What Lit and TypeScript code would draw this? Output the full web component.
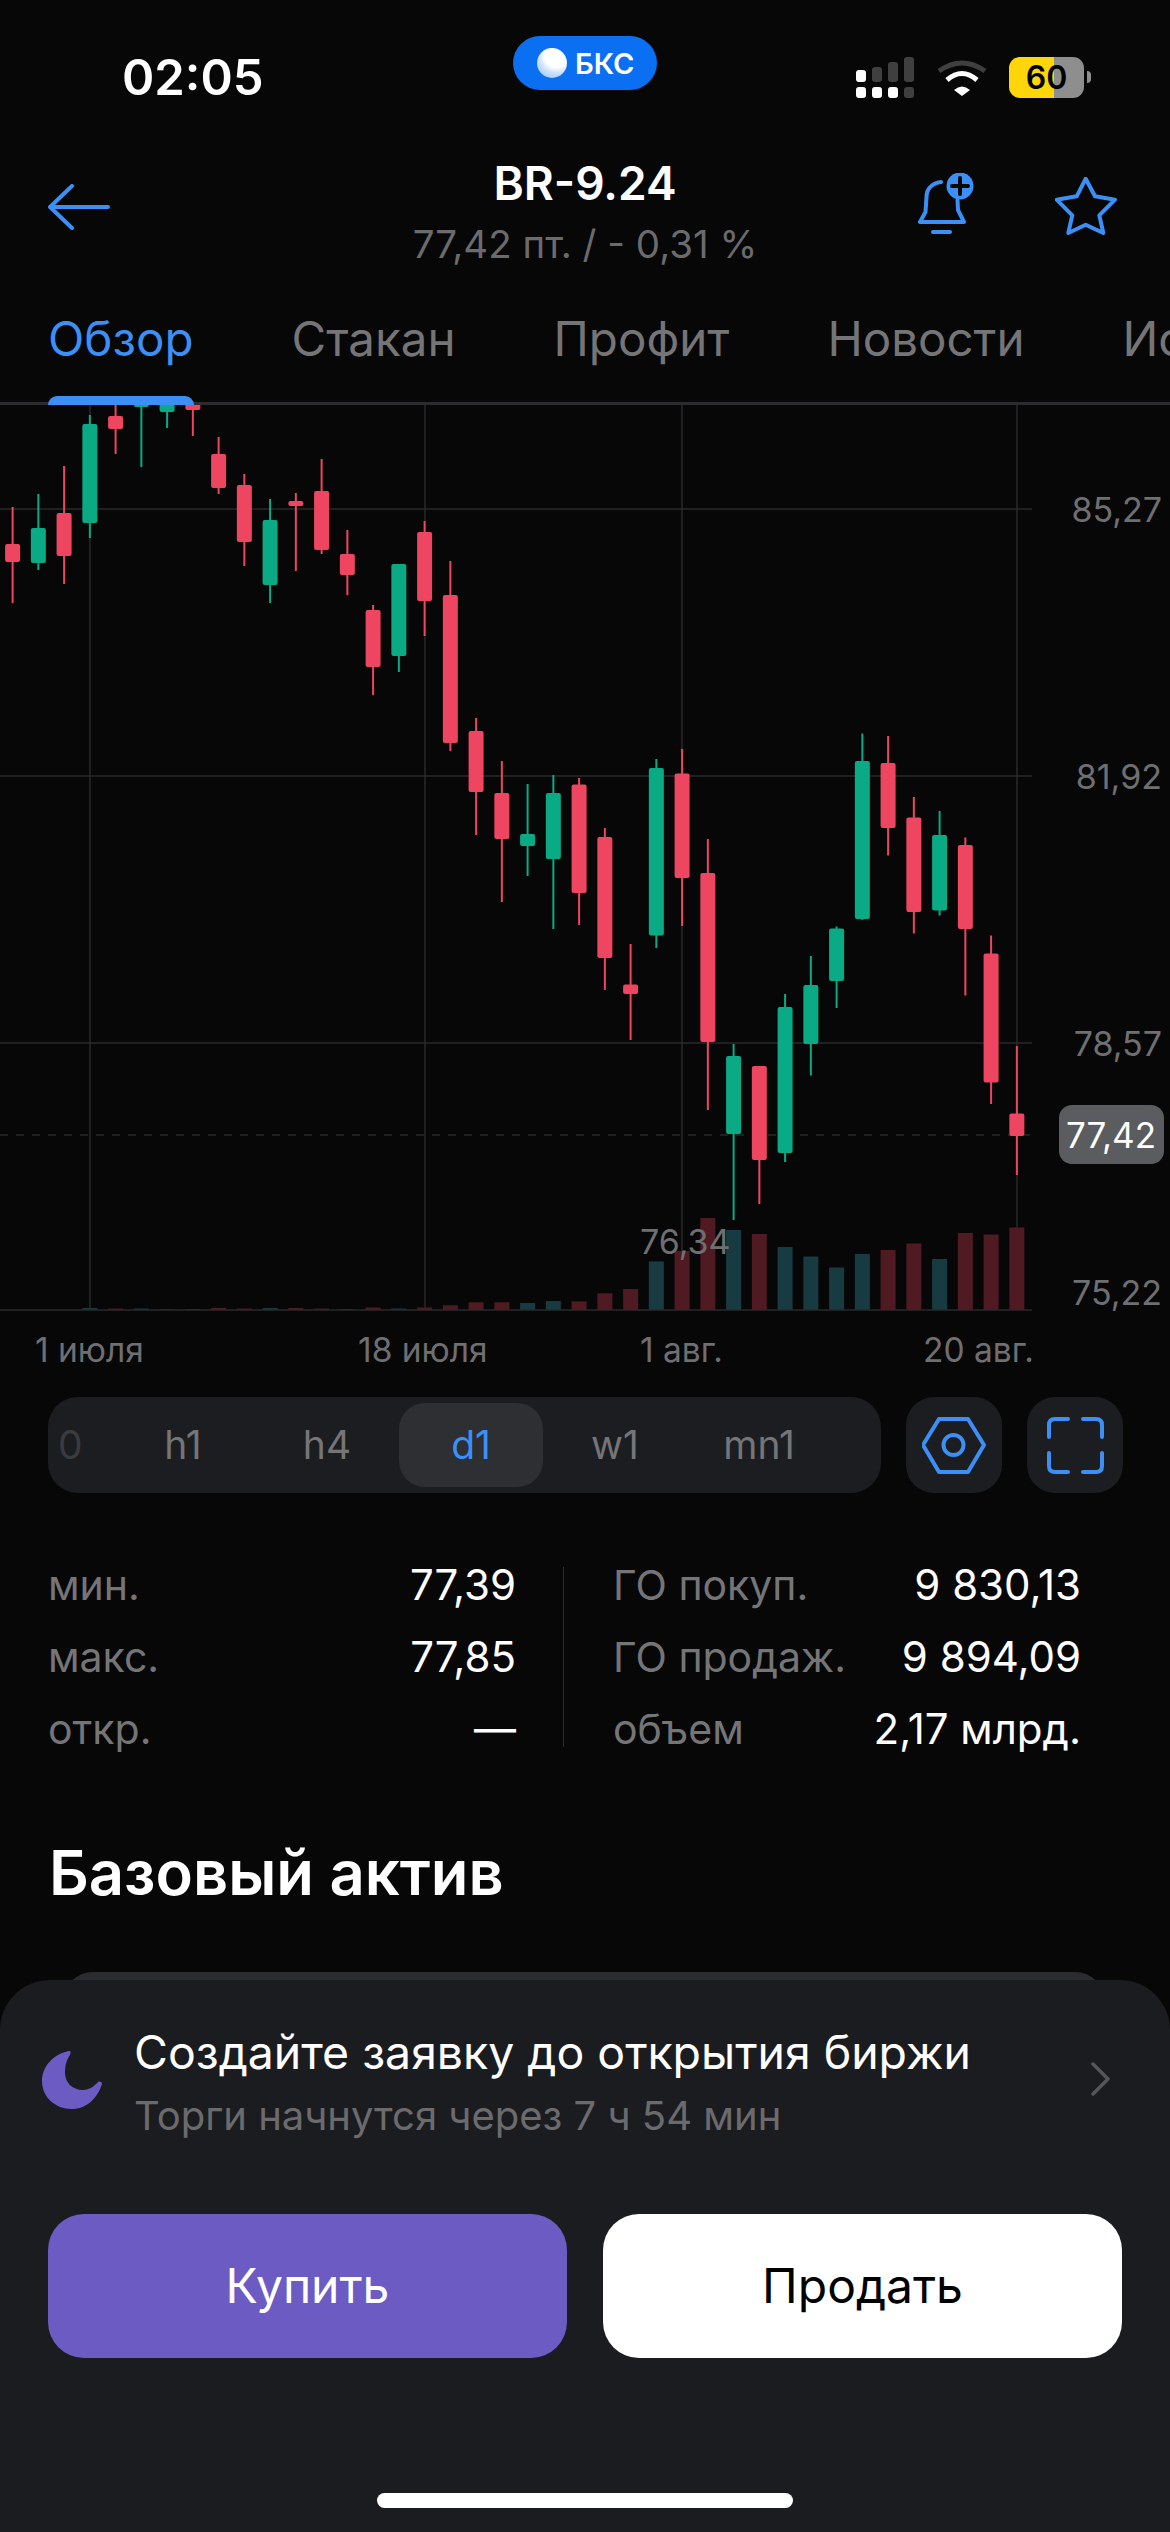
import { LitElement, html, css, svg } from 'lit'
import { customElement } from 'lit/decorators.js'

// [wick top, body top, body bottom, wick bottom, up?, volume height]
type Candle = [number, number, number, number, boolean, number]

const candles: Candle[] = [
  [507, 544, 562, 603, false, 0],
  [494, 528, 563, 570, true, 0],
  [466, 513, 556, 584, false, 0],
  [415, 424, 523, 538, true, 2],
  [380, 416, 429, 454, false, 1.5],
  [380, 380, 407, 467, true, 1.5],
  [380, 380, 412, 428, true, 0.5],
  [380, 380, 410, 436, false, 1],
  [437, 454, 488, 494, false, 2],
  [474, 485, 542, 566, false, 1.5],
  [499, 520, 585, 603, true, 2],
  [493, 501, 506, 571, false, 2],
  [459, 491, 550, 554, false, 1.5],
  [530, 554, 575, 595, false, 1],
  [605, 610, 667, 695, false, 2.5],
  [564, 564, 656, 672, true, 1.5],
  [521, 532, 601, 636, false, 2.5],
  [561, 595, 743, 751, false, 4.7],
  [718, 731, 792, 835, false, 7.7],
  [761, 793, 839, 902, false, 7.7],
  [784, 834, 846, 876, true, 7],
  [775, 793, 859, 929, true, 9],
  [778, 784.5, 893, 925, false, 8.6],
  [828, 837, 958, 990, false, 16.7],
  [944, 984.5, 994, 1040, false, 21],
  [759, 768, 935.5, 948, true, 48.6],
  [749, 773.5, 878, 926, false, 59],
  [839, 873, 1042, 1110, false, 92],
  [1044, 1056, 1134, 1220, true, 80],
  [1066, 1066, 1160, 1204, false, 76],
  [994, 1007, 1153, 1162, true, 63],
  [956, 985, 1044, 1075.5, true, 53.5],
  [926.5, 928.6, 981, 1008, true, 42.5],
  [733.5, 761, 919, 920, true, 56],
  [736, 763, 828, 855.5, false, 60],
  [797, 817.5, 912, 933.5, false, 66.5],
  [811, 835, 910.6, 915.5, true, 51],
  [837.5, 845, 929, 995.5, false, 77],
  [935.5, 953.5, 1082.5, 1104, false, 75.5],
  [1046, 1113.5, 1136, 1175, false, 82.5],
]

const stepX = 25.75
const firstX = 12.6
const baseY = 1310

@customElement('app-root')
export class AppRoot extends LitElement {
  static styles = css`
    :host {
      display: block;
      position: relative;
      width: 1170px;
      height: 2532px;
      overflow: hidden;
      background: #070708;
      color: #fff;
      font-family: Inter, "Noto Sans", sans-serif;
    }

    .status {
      display: grid;
      grid-template-columns: 1fr auto 1fr;
      height: 140px;
      padding: 36px 86px 0;
      box-sizing: border-box;
    }
    .time {
      margin-left: 36px;
      font-size: 49px;
      font-weight: 600;
      line-height: 84px;
    }
    .pill {
      display: flex;
      align-items: center;
      gap: 8px;
      width: 144px;
      height: 54px;
      padding-left: 24px;
      box-sizing: border-box;
      border-radius: 27px;
      background: #0a6ff0;
      font-size: 29px;
      font-weight: 600;
    }
    .pill i {
      width: 30px;
      height: 30px;
      border-radius: 50%;
      background: radial-gradient(circle at 65% 25%, #fff 40%, #cfe3fb 58%, #8dbcf6 100%);
    }
    .sys {
      display: flex;
      justify-content: flex-end;
      align-items: center;
      height: 41px;
      margin-top: 21px;
    }
    .sys .wifi { margin: 0 22px 0 23px; }
    .battery {
      position: relative;
      width: 75px;
      height: 41px;
      border-radius: 11px;
      background: linear-gradient(90deg, #ffd60a 60%, #8e8e8e 60%);
      color: #000;
      font-size: 32px;
      font-weight: 600;
      line-height: 41px;
      text-align: center;
    }
    .battery::after {
      content: '';
      position: absolute;
      left: 78px;
      top: 14px;
      width: 4px;
      height: 12px;
      border-radius: 0 6px 6px 0;
      background: #8e8e8e;
    }

    .nav {
      display: grid;
      grid-template-columns: 1fr auto 1fr;
      height: 150px;
      padding: 13px 48px 0;
      box-sizing: border-box;
    }
    .back { margin-top: 31px; }
    .title {
      font-size: 46px;
      font-weight: 600;
      line-height: 60px;
      text-align: center;
    }
    .sub {
      margin-top: 1px;
      color: #6b6b6d;
      font-size: 38.5px;
      line-height: 60px;
      text-align: center;
    }
    .actions {
      display: flex;
      justify-content: flex-end;
      align-items: flex-start;
      gap: 81px;
      margin: 20px 5px 0 0;
    }
    .actions .star { margin-top: 4px; }

    .tabs {
      display: flex;
      gap: 98px;
      width: 1400px;
      height: 115px;
      padding-left: 48px;
      box-sizing: border-box;
      border-bottom: 3px solid #2c2c2e;
      white-space: nowrap;
    }
    .tabs-clip { overflow: hidden; }
    .tab {
      position: relative;
      height: 100px;
      color: #757577;
      font-size: 47.5px;
      line-height: 98px;
    }
    .tab.active { color: #3b8ff5; }
    .tab.active::after {
      content: '';
      position: absolute;
      left: 0;
      right: 0;
      bottom: -15px;
      height: 9px;
      border-radius: 9px 9px 0 0;
      background: #3b8ff5;
    }

    .chart { display: block; }
    .chart text {
      font-family: Inter, "Noto Sans", sans-serif;
      font-size: 34px;
      fill: #6f6f71;
    }
    .chart .date { font-size: 33.5px; }
    .chart .last {
      font-size: 35px;
      fill: #fff;
    }

    .controls {
      display: flex;
      gap: 25px;
      margin: 17px 48px 0;
    }
    .frames {
      display: flex;
      flex: none;
      width: 833px;
      height: 96px;
      padding: 6px 0;
      box-sizing: border-box;
      border-radius: 30px;
      background: #1c1d21;
    }
    .frame {
      width: 144px;
      border-radius: 26px;
      color: #757577;
      font-size: 39px;
      line-height: 84px;
      text-align: center;
    }
    .frame.cut {
      width: 63px;
      padding-left: 10px;
      box-sizing: border-box;
      color: #3a3b3f;
      text-align: left;
    }
    .frame.on {
      background: #2d2f33;
      color: #3b8ff5;
    }
    .square {
      display: flex;
      flex: none;
      align-items: center;
      justify-content: center;
      width: 96px;
      height: 96px;
      border-radius: 28px;
      background: #1c1d21;
    }

    .stats {
      display: flex;
      margin: 56px 48px 0;
    }
    .col { flex: none; width: 468px; }
    .row {
      display: flex;
      justify-content: space-between;
      height: 72px;
      font-size: 42px;
      line-height: 72px;
    }
    .row span {
      color: #757577;
      font-size: 41px;
    }
    .divider {
      flex: none;
      align-self: center;
      width: 1px;
      height: 180px;
      margin: 0 49px 0 47px;
      background: #2c2c2e;
    }

    h2 {
      margin: 72px 48px 0 49px;
      font-size: 61.5px;
      font-weight: 600;
      line-height: 72px;
    }
    .peek {
      height: 200px;
      margin: 63px 65px 0 63px;
      border-radius: 30px;
      background: #2b2c2f;
    }

    .sheet {
      position: absolute;
      left: 0;
      right: 0;
      bottom: 0;
      height: 552px;
      padding-top: 41px;
      box-sizing: border-box;
      border-radius: 50px 50px 0 0;
      background: #1b1c20;
    }
    .info {
      display: flex;
      align-items: flex-start;
      height: 129px;
      padding: 0 60px 0 42px;
    }
    .moon { flex: none; margin: 28px 32px 0 0; }
    .info-text { flex: 1; }
    .info-title {
      font-size: 46.4px;
      line-height: 62px;
    }
    .info-sub {
      color: #6b6b6d;
      font-size: 40px;
      line-height: 66px;
    }
    .chev { flex: none; margin-top: 41px; }
    .buttons {
      display: flex;
      gap: 36px;
      margin: 64px 48px 0;
    }
    .btn {
      flex: 1;
      height: 144px;
      border-radius: 36px;
      background: #6d5bc4;
      font-size: 48px;
      line-height: 144px;
      text-align: center;
    }
    .btn.sell {
      background: #fff;
      color: #000;
    }
    .home {
      width: 416px;
      height: 15px;
      margin: 135px auto 0;
      border-radius: 8px;
      background: #fff;
    }
  `

  renderChart () {
    const gridH = [509, 776, 1043]
    const gridV = [90, 425, 682, 1017]
    const prices: [string, number][] = [['85,27', 509], ['81,92', 776], ['78,57', 1043], ['75,22', 1292]]
    const dates: [string, number][] = [['1 июля', 35], ['18 июля', 358], ['1 авг.', 640], ['20 авг.', 923]]
    return html`
      <svg class="chart" width="1170" height="975" viewBox="0 405 1170 975">
        ${gridH.map(y => svg`<line x1="0" x2="1032" y1=${y} y2=${y} stroke="#2a2a2c" stroke-width="1.5" />`)}
        ${gridV.map(x => svg`<line x1=${x} x2=${x} y1="405" y2=${baseY} stroke="#2a2a2c" stroke-width="1.5" />`)}
        <line x1="0" x2="1030" y1="1135" y2="1135" stroke="#2a2a2c" stroke-width="1.5" stroke-dasharray="8 8" />
        ${candles.map((c, i) => svg`
          <rect x=${firstX + stepX * i - 7.5} y=${baseY - c[5]} width="15" height=${c[5]} fill=${c[4] ? '#173b40' : '#4f1a22'} />
        `)}
        <line x1="0" x2="1032" y1=${baseY} y2=${baseY} stroke="#2a2a2c" stroke-width="1.5" />
        ${candles.map((c, i) => {
          const x = firstX + stepX * i
          const color = c[4] ? '#0aab84' : '#ee4660'
          return svg`
            <line x1=${x} x2=${x} y1=${c[0]} y2=${c[3]} stroke=${color} stroke-width="2" />
            <rect x=${x - 7.5} y=${c[1]} width="15" height=${c[2] - c[1]} rx="2" fill=${color} />
          `
        })}
        ${prices.map(([t, y]) => svg`<text x="1162" y=${y} text-anchor="end" dominant-baseline="central">${t}</text>`)}
        <text x="640" y="1241" dominant-baseline="central">76,34</text>
        <rect x="1059" y="1105" width="105" height="59" rx="13" fill="#5b5c60" />
        <text class="last" x="1111" y="1135" text-anchor="middle" dominant-baseline="central">77,42</text>
        ${dates.map(([t, x]) => svg`<text class="date" x=${x} y="1350" dominant-baseline="central">${t}</text>`)}
      </svg>
    `
  }

  render () {
    return html`
      <div class="status">
        <div class="time">02:05</div>
        <div class="pill"><i></i>БКС</div>
        <div class="sys">
          <svg width="58" height="41" viewBox="0 0 58 41">
            <rect x="0" y="13" width="10" height="12" rx="3" fill="#fff" />
            <rect x="16" y="10" width="10" height="15" rx="3" fill="#3f3f3f" />
            <rect x="32" y="5" width="10" height="20" rx="3" fill="#3f3f3f" />
            <rect x="48" y="0" width="10" height="25" rx="3" fill="#3f3f3f" />
            <rect x="0" y="30" width="10" height="11" rx="3" fill="#fff" />
            <rect x="16" y="30" width="10" height="11" rx="3" fill="#fff" />
            <rect x="32" y="30" width="10" height="11" rx="3" fill="#fff" />
            <rect x="48" y="30" width="10" height="11" rx="3" fill="#3f3f3f" />
          </svg>
          <svg class="wifi" width="50" height="37" viewBox="0 0 50 37" fill="none">
            <path d="M2 12 Q25 -4 48 12" stroke="#3f3f3f" stroke-width="5" />
            <path d="M10 21 Q25 8 40 21" stroke="#fff" stroke-width="5" />
            <path d="M17 31 Q25 24 33 31 L25 37 Z" fill="#fff" />
          </svg>
          <div class="battery">60</div>
        </div>
      </div>

      <div class="nav">
        <svg class="back" width="62" height="46" viewBox="0 0 62 46" fill="none" stroke="#3b8ff5" stroke-width="4" stroke-linecap="round" stroke-linejoin="round">
          <path d="M60 23 H2 M24 2 L2 23 L24 44" />
        </svg>
        <div>
          <div class="title">BR-9.24</div>
          <div class="sub">77,42 пт. / - 0,31 %</div>
        </div>
        <div class="actions">
          <svg width="56" height="62" viewBox="0 0 56 62" fill="none" stroke="#3b8ff5" stroke-width="4" stroke-linecap="round" stroke-linejoin="round">
            <path d="M23 9 C14 10 8.500 16 8.500 24 L7.500 39 L2 49 H46 L40 37 L39.500 27" />
            <path d="M15 59 H32" />
            <circle cx="42" cy="13" r="13.500" fill="#3b8ff5" stroke="none" />
            <path d="M34 13 H50 M42 5 V21" stroke="#070708" />
          </svg>
          <svg class="star" width="62" height="58" viewBox="0 0 62 58" fill="none" stroke="#3b8ff5" stroke-width="4" stroke-linejoin="round">
            <path d="M30.700 1.700 L40 19.300 L60 22.700 L44.300 38.300 L48.300 56 L30.700 47.700 L13.300 56 L17.300 38.300 L1.700 22.700 L21.700 19.300 Z" />
          </svg>
        </div>
      </div>

      <div class="tabs-clip">
        <div class="tabs">
          <div class="tab active">Обзор</div>
          <div class="tab">Стакан</div>
          <div class="tab">Профит</div>
          <div class="tab">Новости</div>
          <div class="tab">История</div>
        </div>
      </div>

      ${this.renderChart()}

      <div class="controls">
        <div class="frames">
          <div class="frame cut">0</div>
          <div class="frame">h1</div>
          <div class="frame">h4</div>
          <div class="frame on">d1</div>
          <div class="frame">w1</div>
          <div class="frame">mn1</div>
        </div>
        <div class="square">
          <svg width="64" height="57" viewBox="0 0 64 57" fill="none" stroke="#3b8ff5" stroke-width="4" stroke-linejoin="round">
            <path d="M1 28 L17 2 H46 L62 28 L46 55 H17 Z" />
            <circle cx="31.500" cy="28" r="10" />
          </svg>
        </div>
        <div class="square">
          <svg width="57" height="57" viewBox="0 0 57 57" fill="none" stroke="#3b8ff5" stroke-width="4" stroke-linecap="round">
            <path d="M2 20 V8 Q2 2 8 2 H21 M36 2 H49 Q55 2 55 8 V20 M55 36 V49 Q55 55 49 55 H36 M21 55 H8 Q2 55 2 49 V36" />
          </svg>
        </div>
      </div>

      <div class="stats">
        <div class="col">
          <div class="row"><span>мин.</span>77,39</div>
          <div class="row"><span>макс.</span>77,85</div>
          <div class="row"><span>откр.</span>—</div>
        </div>
        <div class="divider"></div>
        <div class="col">
          <div class="row"><span>ГО покуп.</span>9 830,13</div>
          <div class="row"><span>ГО продаж.</span>9 894,09</div>
          <div class="row"><span>объем</span>2,17 млрд.</div>
        </div>
      </div>

      <h2>Базовый актив</h2>
      <div class="peek"></div>

      <div class="sheet">
        <div class="info">
          <svg class="moon" width="60" height="60" viewBox="0 0 60 60" fill="#6d5bc4">
            <path d="M27 2 C12 5 0 17 0 32 C0 48 13 60 30 60 C44 60 55 50 60 35 C60 33 58 32 56 33 C52 38 46 41 41 41 C30 41 23 33 23 24 C23 16 25 10 28 6 C29 3 29 2 27 2 Z" />
          </svg>
          <div class="info-text">
            <div class="info-title">Создайте заявку до открытия биржи</div>
            <div class="info-sub">Торги начнутся через 7 ч 54 мин</div>
          </div>
          <svg class="chev" width="20" height="34" viewBox="0 0 20 34" fill="none" stroke="#55565a" stroke-width="3.500" stroke-linecap="round" stroke-linejoin="round">
            <path d="M3 2 L18 17 L3 32" />
          </svg>
        </div>
        <div class="buttons">
          <div class="btn">Купить</div>
          <div class="btn sell">Продать</div>
        </div>
        <div class="home"></div>
      </div>
    `
  }
}
